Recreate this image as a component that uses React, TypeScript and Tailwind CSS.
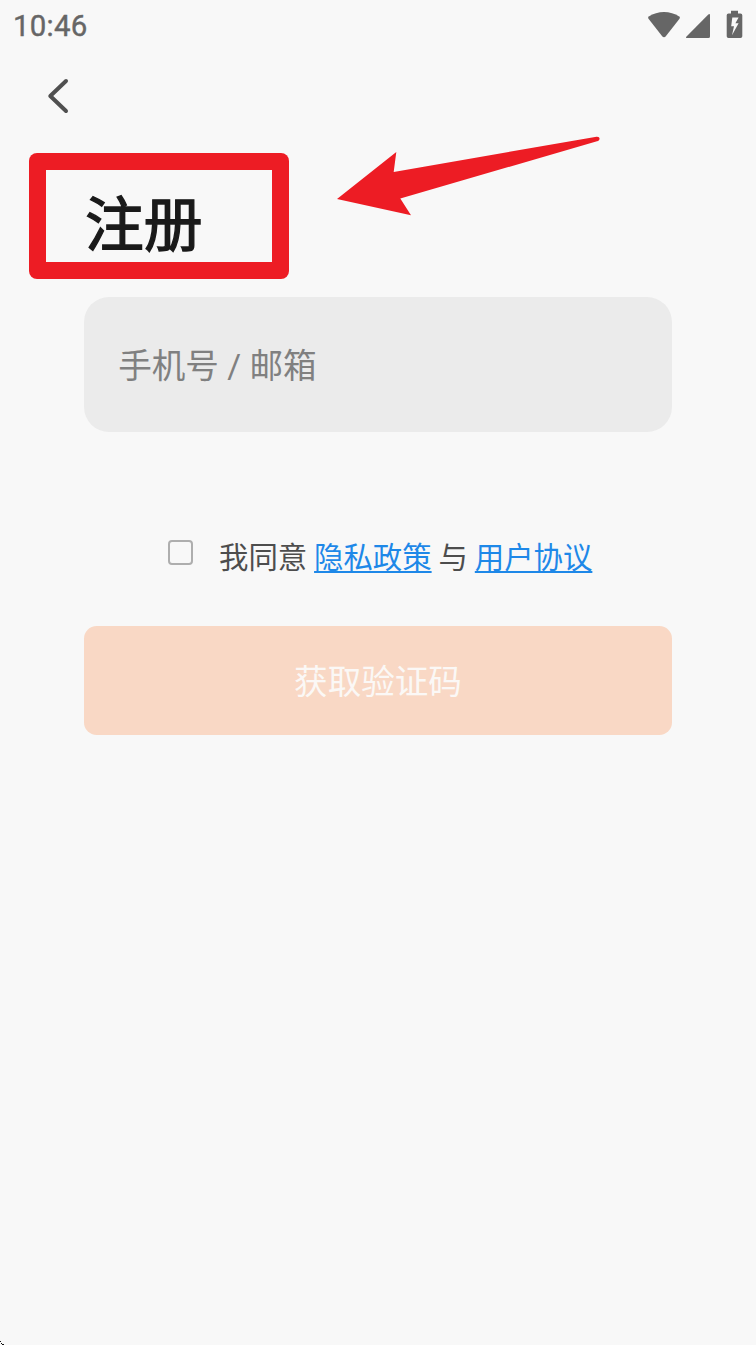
import React from "react";

function StatusBar() {
  return (
    <header className="flex h-[50px] items-center justify-between pl-[13px] pr-[13px]">
      <span className="font-[Roboto,sans-serif] pt-[2px] text-[29.4px] leading-[50px] font-normal tracking-[0.25px] text-[#666666] [-webkit-text-stroke:0.4px_#666666]">10:46</span>
      <svg width="96" height="50" viewBox="647 0 96 50" fill="#666666" aria-hidden="true">
        <path d="M664 37.2C663.2 37.2 662.7 36.8 662.2 36.2L648.5 18.8Q647.5 17.4 648.8 16.5C657.5 10.5 670.5 10.5 679.2 16.5Q680.5 17.4 679.5 18.8L665.8 36.2C665.3 36.8 664.8 37.2 664 37.2Z" />
        <path d="M708.3 14.5Q710 13.2 710 15.2V36.4Q710 38 708.4 38H687.2Q685.2 38 686.5 36.4Z" />
        <path fillRule="evenodd" d="M731 10.7H738V13.5H740.5Q742.3 13.5 742.3 15.3V36.2Q742.3 38 740.5 38H728.5Q726.7 38 726.7 36.2V15.3Q726.7 13.5 728.5 13.5H731ZM732.3 17.4L731.2 26.3H734L732 35.3L738.6 23.3H735.4L738.6 17.4Z" />
      </svg>
    </header>
  );
}

function Annotations() {
  return (
    <>
      <div className="pointer-events-none absolute top-[153px] left-[29px] h-[126px] w-[260px] rounded-[8px] bg-[#ed1c24] [clip-path:path(evenodd,'M0_0H260V126H0ZM17_17V109H243V17Z')]" />
      <svg className="pointer-events-none absolute top-[130px] left-[330px]" width="280" height="90" viewBox="330 130 280 90" fill="#ed1c24" aria-hidden="true">
        <path d="M337 199L396.3 152L393.7 172L596.5 136.7C600.5 136.3 600.5 140.5 597 141.3L400.3 198.5L411 215.2Z" />
      </svg>
    </>
  );
}

export default function App() {
  return (
    <div className="relative flex h-[1345px] w-[756px] flex-col overflow-hidden bg-[#f8f8f8] font-[Roboto,'Noto_Sans_CJK_SC',sans-serif]">
      <StatusBar />
      <nav className="flex h-[92px] pt-[28px] pl-[46px]">
        <button aria-label="返回" className="h-[37px] w-[24px]">
          <svg width="24" height="37" viewBox="46 78 24 37" fill="none" stroke="#505050" strokeWidth="4" strokeLinecap="round" strokeLinejoin="round">
            <path d="M66 81L50.3 96L66 111" />
          </svg>
        </button>
      </nav>
      <main className="flex flex-col px-[84px]">
        <h1 className="mt-[36px] h-[86px] pl-px font-['Noto_Sans_CJK_SC',sans-serif] text-[58.8px] leading-[86px] font-normal text-[#1a1a1a] [-webkit-text-stroke:1.4px_#1a1a1a]">注册</h1>
        <input
          aria-label="手机号 / 邮箱"
          placeholder="手机号 / 邮箱"
          className="mt-[33px] h-[134.5px] rounded-[25px] bg-[#ebebeb] px-[34.2px] pt-[4px] text-[33.6px] font-normal text-[#333333] outline-none placeholder:text-[#808080]"
        />
        <div className="mt-[100px] flex h-[48px] items-center pl-[84px]">
          <input type="checkbox" aria-label="同意" className="mb-[7px] size-[25px] appearance-none rounded-[4px] border-2 border-[#aeaeae]" />
          <p className="ml-[26px] pt-[5px] text-[29.4px] leading-[48px] [word-spacing:-0.4px] whitespace-pre text-[#4d4d4d]">我同意 <a className="text-[#1e88e8] underline decoration-[1.5px] underline-offset-[3px]">隐私政策</a> 与 <a className="text-[#1e88e8] underline decoration-[1.5px] underline-offset-[3px]">用户协议</a></p>
        </div>
        <button className="mt-[46px] h-[109px] rounded-[12.6px] bg-[#f9d8c5] pt-[6px] text-[33.6px] text-[#fbf8f6]">获取验证码</button>
      </main>
      <Annotations />
      <svg className="absolute bottom-0 left-0" width="4" height="4" viewBox="0 0 4 4" fill="#111111" aria-hidden="true">
        <path d="M0 0H1V1H0ZM1 2H2V3H1ZM2 3H4V4H2Z" />
      </svg>
    </div>
  );
}
